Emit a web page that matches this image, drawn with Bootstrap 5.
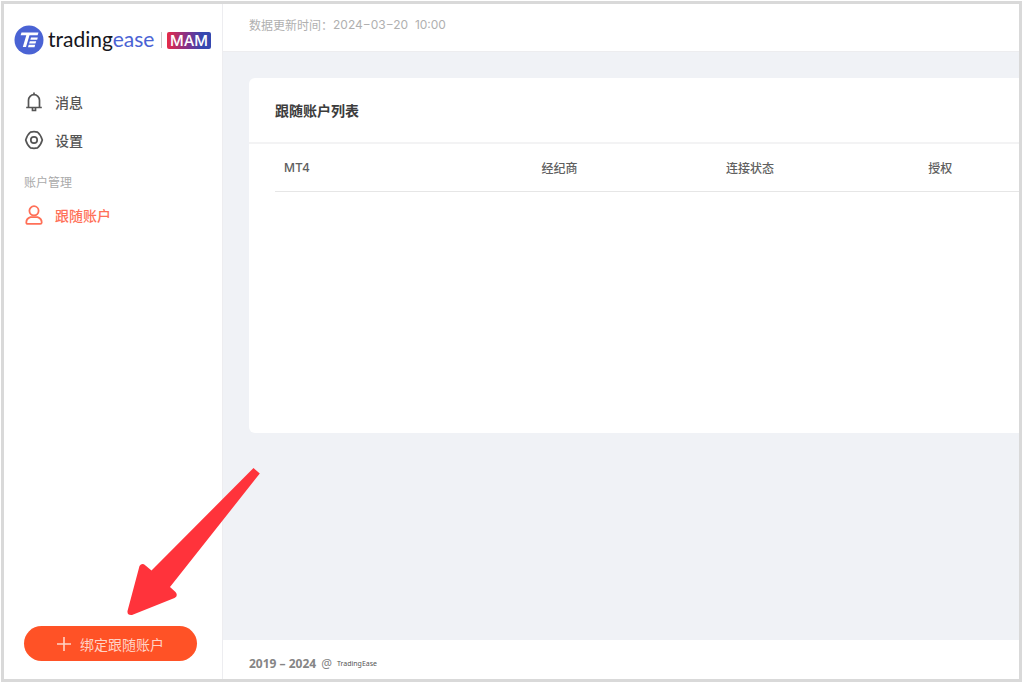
<!DOCTYPE html>
<html lang="zh-CN">
<head>
<meta charset="utf-8">
<meta name="viewport" content="width=device-width, initial-scale=1">
<title>TradingEase MAM</title>
<link href="https://cdn.jsdelivr.net/npm/bootstrap@5.3.0/dist/css/bootstrap.min.css" rel="stylesheet">
<style>
  body { font-family: "Noto Sans", "Noto Sans CJK SC", sans-serif; font-size: 14px; line-height: 20px; color: #444; background: #fff; padding: 1px 2px 2px 1px; }
  .app-frame { border: 3px solid #d9d9d9; background: #f0f2f6; }
  .sidebar { width: 219px; border-right: 1px solid #ededf0; }
  .cjk { font-family: "Noto Sans CJK SC", sans-serif; }
  .brand { padding: 21px 10px 0; height: 79px; }
  .brand-name { font: 21px/24px Lato, sans-serif; color: #16161c; margin: -2px 0 0 4px; width: 107px; }
  .brand-name span { color: #4a63d4; }
  .brand-rule { width: 1px; height: 16px; background: #ccc; margin: 0 5px 0 6px; }
  .brand-tag { font: 500 15px/17px Inter, sans-serif; width: 44px; border-radius: 2px; background: linear-gradient(90deg, #e62a48, #7a3490 50%, #3548b0 80%); }
  .side-link { height: 38px; padding-left: 20px; gap: 11px; color: #555; text-decoration: none; font-weight: 500; line-height: 18px; }
  .side-link.active { color: #ff7058; }
  .side-title { font-size: 12px; padding-left: 20px; height: 20px; margin: 13px 0 4px; color: #aaa; }
  .bind-btn { height: 35px; margin: 0 25px 18px 20px; background: #ff5226; color: #ffd3c6; border: 0; gap: 9px; font-size: 14px; line-height: 18px; }
  .bind-btn:hover { background: #f04a20; color: #fff; }
  .topbar { height: 48px; border-bottom: 1px solid #ededef; padding: 11px 0 0 26px; color: #b0b0b0; font-size: 12px; }
  .clock { font: 12px/20px Inter, sans-serif; }
  .accounts { margin: 26px 0 0 26px; height: 355px; border-radius: 6px 0 0 6px; }
  .accounts-head { height: 66px; border-bottom: 2px solid #f3f3f4; padding-left: 26px; font-size: 14px; font-weight: 700; line-height: 20px; color: #3c3c3c; }
  .accounts-body { padding-left: 26px; }
  .accounts-table { table-layout: fixed; font-size: 12px; line-height: 20px; }
  .accounts-table th { padding: 14px 9px 13px; font-weight: 500; color: #606060; border-bottom: 1px solid #e6e6e6; }
  .latin { font-family: Inter, sans-serif; }
  .page-foot { height: 39px; padding: 8px 0 0 26px; color: #858585; gap: 5px; font-size: 12px; }
  .foot-name { font-size: 7px; color: #555; }
  .pointer { left: 120px; bottom: 62px; pointer-events: none; }
</style>
</head>
<body class="d-flex min-vh-100">
<div class="app-frame d-flex flex-grow-1 position-relative overflow-hidden">
  <aside class="sidebar bg-white d-flex flex-column flex-shrink-0">
    <div class="brand d-flex align-items-start">
      <div class="d-flex align-items-center">
        <svg width="30" height="30" viewBox="0 0 30 30" aria-hidden="true"><circle cx="15" cy="15" r="14.5" fill="#4a63d4"/><path fill="#fff" d="M7.5 7.500H24.500L23.600 10.300H15.500L12 22H8.800L12.300 10.300H6.600ZM17 12.500H23.800L23.200 14.800H16.300ZM15.800 16.300H22.200L21.500 18.500H15.100ZM14.700 19.800H21.200L20.500 22.200H14Z"/></svg>
        <div class="brand-name">trading<span>ease</span></div>
        <div class="brand-rule"></div>
        <div class="brand-tag text-white text-center">MAM</div>
      </div>
    </div>
    <nav class="cjk">
      <a class="side-link d-flex align-items-center" href="#messages">
        <svg width="20" height="20" viewBox="0 0 20 20" fill="none" stroke="currentColor" stroke-width="1.7" aria-hidden="true"><path d="M4.500 15.500V8.200a5.500 5.500 0 0 1 11 0v7.300M2.200 15.500h15.600M10 2.700V.6M8.500 16v2.500h3V16"/></svg>
        <span>消息</span>
      </a>
      <a class="side-link d-flex align-items-center" href="#settings">
        <svg width="20" height="20" viewBox="0 0 20 20" fill="none" stroke="currentColor" stroke-width="1.7" stroke-linejoin="round" aria-hidden="true"><path d="M6.500 2.100Q10 1.300 13.500 2.100Q16.700 4.600 18.300 10Q16.700 15.400 13.500 17.900Q10 18.700 6.500 17.900Q3.300 15.400 1.700 10Q3.300 4.600 6.500 2.100Z"/><circle cx="10" cy="10" r="3.200"/></svg>
        <span>设置</span>
      </a>
      <div class="side-title">账户管理</div>
      <a class="side-link active d-flex align-items-center" href="#followers">
        <svg width="20" height="20" viewBox="0 0 20 20" fill="none" stroke="currentColor" stroke-width="1.8" stroke-linejoin="round" aria-hidden="true"><circle cx="10" cy="5.800" r="4.600"/><path d="M6.500 12.200h7q4.200 1.500 4.200 5.200 0 1.500-1.500 1.500H3.800q-1.500 0-1.500-1.500 0-3.700 4.200-5.200Z"/></svg>
        <span>跟随账户</span>
      </a>
    </nav>
    <button type="button" class="bind-btn btn rounded-pill cjk mt-auto p-0 d-flex align-items-center justify-content-center">
      <svg width="14" height="14" viewBox="0 0 14 14" stroke="currentColor" stroke-width="1.6" aria-hidden="true"><path d="M7 0v14M0 7h14"/></svg>
      <span>绑定跟随账户</span>
    </button>
  </aside>
  <div class="d-flex flex-column flex-grow-1">
    <header class="topbar bg-white d-flex align-items-start">
      <span class="cjk">数据更新时间：</span><time class="clock" datetime="2024-03-20T10:00">2024−03−20&nbsp; 10:00</time>
    </header>
    <main class="flex-grow-1">
      <section class="accounts bg-white">
        <h1 class="accounts-head cjk m-0 d-flex align-items-center">跟随账户列表</h1>
        <div class="accounts-body">
          <table class="accounts-table cjk w-100">
            <colgroup><col style="width:34.6%"><col style="width:24.8%"><col style="width:27.2%"><col></colgroup>
            <thead><tr><th scope="col" class="latin">MT4</th><th scope="col">经纪商</th><th scope="col">连接状态</th><th scope="col">授权</th></tr></thead>
          </table>
        </div>
      </section>
    </main>
    <footer class="page-foot bg-white d-flex align-items-center"><span class="fw-bold">2019 – 2024</span><span>@</span><span class="foot-name">TradingEase</span></footer>
  </div>
  <svg class="pointer position-absolute" width="140" height="150" viewBox="124 467 140 150" aria-hidden="true"><path d="M253.500 468 259.800 473.500 170 587 175.500 592Q178.500 596 174.500 598L132 615Q127 615.500 127.500 611L139.500 566Q142 562.500 145.500 565.500L151.500 570.500Z" fill="#ff333b"/></svg>
</div>
<script src="https://cdn.jsdelivr.net/npm/bootstrap@5.3.0/dist/js/bootstrap.bundle.min.js"></script>
</body>
</html>
